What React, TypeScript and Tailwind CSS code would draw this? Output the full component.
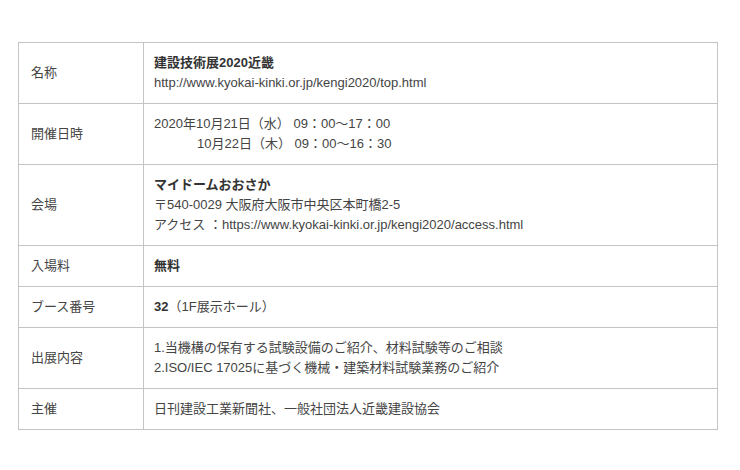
import React from "react";

const rows: { label: string; h: string; content: React.ReactNode }[] = [
  {
    label: "名称",
    h: "h-[60px]",
    content: (
      <>
        <div className="font-bold text-[#333]">建設技術展2020近畿</div>
        <div>http://www.kyokai-kinki.or.jp/kengi2020/top.html</div>
      </>
    ),
  },
  {
    label: "開催日時",
    h: "h-[61px]",
    content: (
      <>
        <div>2020年10月21日（水） 09：00～17：00</div>
        <div className="pl-[43px]">10月22日（木） 09：00～16：30</div>
      </>
    ),
  },
  {
    label: "会場",
    h: "h-[81px]",
    content: (
      <>
        <div className="font-bold text-[#333]">マイドームおおさか</div>
        <div>〒540-0029 大阪府大阪市中央区本町橋2-5</div>
        <div>アクセス ：https://www.kyokai-kinki.or.jp/kengi2020/access.html</div>
      </>
    ),
  },
  {
    label: "入場料",
    h: "h-[41px]",
    content: <div className="font-bold text-[#333]">無料</div>,
  },
  {
    label: "ブース番号",
    h: "h-[41px]",
    content: (
      <div>
        <span className="font-bold text-[#333]">32</span>（1F展示ホール）
      </div>
    ),
  },
  {
    label: "出展内容",
    h: "h-[61px]",
    content: (
      <>
        <div>1.当機構の保有する試験設備のご紹介、材料試験等のご相談</div>
        <div>2.ISO/IEC 17025に基づく機械・建築材料試験業務のご紹介</div>
      </>
    ),
  },
  {
    label: "主催",
    h: "h-[41px]",
    content: <div>日刊建設工業新聞社、一般社団法人近畿建設協会</div>,
  },
];

export default function App() {
  return (
    <div
      className="w-[740px] h-[470px] bg-white pt-[42px] pl-[18px] text-[13px] leading-[20px] text-[#444]"
      style={{ fontFamily: '"Liberation Sans", "Noto Sans CJK JP", sans-serif' }}
    >
      <div className="w-[700px] border border-[#c4c4c4]">
        {rows.map((r, i) => (
          <div
            key={i}
            className={`flex ${r.h} ${i > 0 ? "border-t border-[#c4c4c4]" : ""} box-border`}
          >
            <div className="w-[125px] shrink-0 border-r border-[#c4c4c4] flex items-center pl-[12px]">
              {r.label}
            </div>
            <div className="flex-1 flex flex-col justify-center pl-[10px]">{r.content}</div>
          </div>
        ))}
      </div>
    </div>
  );
}
